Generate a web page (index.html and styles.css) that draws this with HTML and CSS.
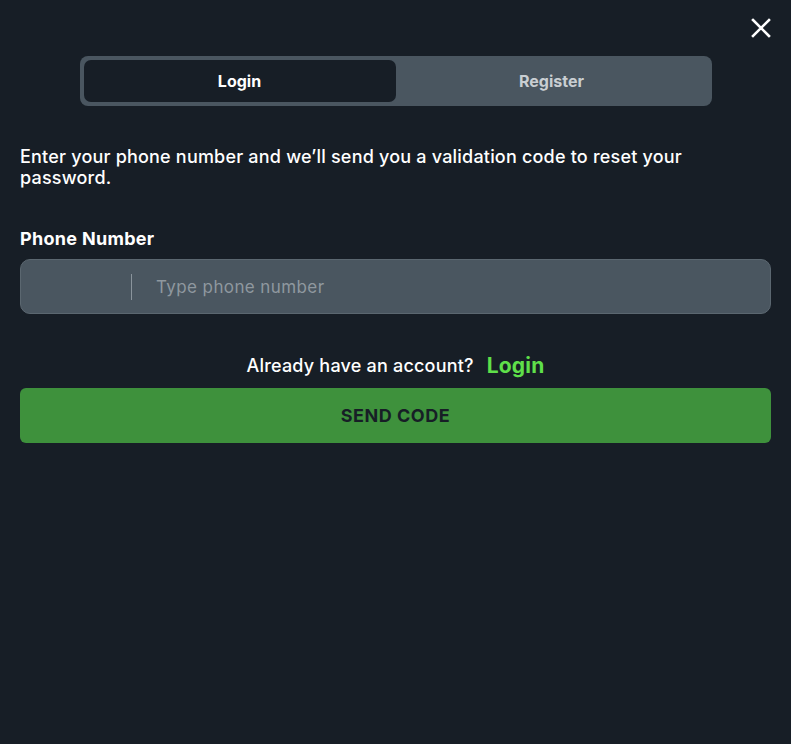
FILE: index.html
```html
<!DOCTYPE html>
<html lang="en">
<head>
  <meta charset="UTF-8">
  <meta name="viewport" content="width=device-width, initial-scale=1.0">
  <title>Reset password</title>
  <link rel="stylesheet" href="styles.css">
</head>
<body>
  <div class="modal">
    <button class="close-button" aria-label="Close">
      <svg width="20" height="20" viewBox="0 0 20 20">
        <path d="M2 2 L18 18 M18 2 L2 18" stroke="#fff" stroke-width="2.6" stroke-linecap="square"/>
      </svg>
    </button>

    <div class="tabs">
      <button class="tab current">Login</button>
      <button class="tab">Register</button>
    </div>

    <p class="intro">Enter your phone number and we’ll send you a validation code to reset your password.</p>

    <label class="field-label" for="phone">Phone Number</label>
    <div class="phone-input">
      <div class="country"></div>
      <input id="phone" type="tel" placeholder="Type phone number">
    </div>

    <div class="switch-row">
      <span>Already have an account?</span>
      <a href="#" class="switch-link">Login</a>
    </div>

    <button class="send-button">SEND CODE</button>
  </div>
</body>
</html>
```

FILE: styles.css
```css
html, body {
  height: 100%;
}
body {
  font-family: Inter, 'Noto Sans', sans-serif;
  background-color: #171e26;
  color: #fff;
  margin: 0;
  padding: 0;
}
.modal {
  position: relative;
  padding: 56px 20px 20px;
}
.close-button {
  position: absolute;
  top: 18px;
  right: 20px;
  width: 20px;
  height: 20px;
  padding: 0;
  border: none;
  background: none;
  cursor: pointer;
}
.close-button svg {
  display: block;
}
.tabs {
  width: 632px;
  height: 50px;
  margin: 0 auto;
  box-sizing: border-box;
  padding: 4px;
  background-color: #4a5660;
  border-radius: 8px;
  display: flex;
}
.tab {
  flex: 1;
  border: none;
  background: none;
  font-family: inherit;
  font-size: 16px;
  font-weight: 700;
  color: #c9ced2;
  border-radius: 7px;
  cursor: pointer;
}
.tab.current {
  background-color: #171e26;
  color: #fff;
}
.intro {
  margin: 40px 0 0;
  font-size: 18px;
  font-weight: 500;
  letter-spacing: 0.2px;
  line-height: 21px;
  color: #fff;
}
.field-label {
  display: block;
  margin-top: 40px;
  font-size: 18px;
  font-weight: 700;
  letter-spacing: 0.3px;
  line-height: 22px;
}
.phone-input {
  margin-top: 9px;
  height: 55px;
  box-sizing: border-box;
  background-color: #4a5660;
  border: 1px solid #5b6770;
  border-radius: 10px;
  display: flex;
  align-items: center;
}
.country {
  width: 110px;
  height: 26px;
  border-right: 1px solid #8a949c;
}
.phone-input input {
  flex: 1;
  margin-left: 22px;
  border: none;
  background: none;
  outline: none;
  font-family: inherit;
  font-size: 17px;
  letter-spacing: 0.4px;
  color: #fff;
}
.phone-input input::placeholder {
  color: #8f989f;
}
.switch-row {
  margin-top: 38px;
  display: flex;
  justify-content: center;
  align-items: center;
  gap: 13px;
  font-size: 18px;
  font-weight: 500;
  letter-spacing: 0.2px;
  height: 26px;
}
.switch-link {
  color: #5fe04a;
  font-size: 21px;
  font-weight: 700;
  text-decoration: none;
}
.send-button {
  display: block;
  width: 100%;
  height: 55px;
  margin-top: 10px;
  border: none;
  border-radius: 6px;
  background-color: #3e913c;
  color: #171e26;
  font-family: inherit;
  font-size: 18px;
  font-weight: 700;
  letter-spacing: 0.5px;
  cursor: pointer;
}
```
